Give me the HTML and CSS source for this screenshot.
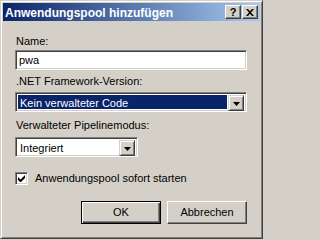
FILE: index.html
```html
<!DOCTYPE html>
<html lang="de">
<head>
<meta charset="utf-8">
<title>Anwendungspool hinzufügen</title>
<link rel="stylesheet" href="styles.css">
</head>
<body>
<div class="window">
  <div class="titlebar">
    <span class="title">Anwendungspool hinzufügen</span>
    <div class="tbtns">
      <span class="tbtn help">?</span>
      <span class="tbtn close"><svg width="8" height="7" viewBox="0 0 8 7"><path d="M0 0h2l2 2.2L6 0h2L5 3.5 8 7H6L4 4.8 2 7H0l3-3.5z" fill="#000"/></svg></span>
    </div>
  </div>
  <div class="content">
    <div class="lbl lbl-name">Name:</div>
    <div class="field text">pwa</div>
    <div class="lbl lbl-net">.NET Framework-Version:</div>
    <div class="field combo wide">
      <span class="value selected">Kein verwalteter Code</span>
      <span class="drop"><svg width="7" height="4" viewBox="0 0 7 4"><path d="M0 0h7L3.5 4z" fill="#000"/></svg></span>
    </div>
    <div class="lbl lbl-pipe">Verwalteter Pipelinemodus:</div>
    <div class="field combo narrow">
      <span class="value">Integriert</span>
      <span class="drop"><svg width="7" height="4" viewBox="0 0 7 4"><path d="M0 0h7L3.5 4z" fill="#000"/></svg></span>
    </div>
    <div class="check-row">
      <span class="checkbox"><svg width="7" height="7" viewBox="0 0 7 7"><path d="M0 2v3l2 2h1l4-4V0L2.5 4.5z" fill="#000"/></svg></span>
      <span class="check-label">Anwendungspool sofort starten</span>
    </div>
    <div class="buttons">
      <span class="btn default">OK</span>
      <span class="btn">Abbrechen</span>
    </div>
  </div>
</div>
</body>
</html>
```

FILE: styles.css
```css
html, body {
  margin: 0;
  padding: 0;
  background: #d4d0c8;
}

body {
  font-family: "Liberation Sans", Arial, sans-serif;
  font-size: 11px;
  line-height: 13px;
  color: #000;
}

.window {
  box-sizing: border-box;
  width: 263px;
  height: 239px;
  background: #d4d0c8;
  border: 1px solid;
  border-color: #d4d0c8 #404040 #404040 #d4d0c8;
  box-shadow: inset 1px 1px #ffffff, inset -1px -1px #808080;
  padding: 2px;
  display: flex;
  flex-direction: column;
}

.titlebar {
  box-sizing: border-box;
  height: 18px;
  background: linear-gradient(to right, #0a246a, #a6caf0);
  display: flex;
  align-items: flex-start;
  justify-content: space-between;
  padding: 0 2px 0 2px;
}

.title {
  color: #fff;
  font-weight: bold;
  font-size: 12px;
  line-height: 14px;
  padding-top: 3px;
}

.tbtns {
  display: flex;
  gap: 1px;
  padding-top: 2px;
}

.tbtn {
  box-sizing: border-box;
  width: 16px;
  height: 14px;
  background: #d4d0c8;
  border: 1px solid;
  border-color: #ffffff #404040 #404040 #ffffff;
  box-shadow: inset -1px -1px #808080;
  display: flex;
  align-items: center;
  justify-content: center;
}

.help {
  font-weight: bold;
  font-size: 11px;
  line-height: 11px;
  padding-top: 1px;
  color: #000;
}

.content {
  flex: 1;
  display: flex;
  flex-direction: column;
  padding: 14px 13px 0 12px;
}

.lbl {
  padding-left: 1px;
}

.lbl-net {
  margin-top: 5px;
}

.lbl-pipe {
  margin-top: 7px;
}

.field {
  box-sizing: border-box;
  height: 20px;
  background: #fff;
  border: 1px solid;
  border-color: #808080 #ffffff #ffffff #808080;
  box-shadow: inset 1px 1px #404040, inset -1px -1px #d4d0c8;
  padding: 2px;
}

.text {
  margin-top: 2px;
  padding-left: 3px;
  line-height: 15px;
}

.combo {
  display: flex;
  align-items: stretch;
}

.wide {
  margin-top: 4px;
}

.narrow {
  margin-top: 5px;
  width: 123px;
}

.value {
  flex: 1;
  line-height: 16px;
  padding-left: 2px;
  margin-right: 1px;
}

.selected {
  background: #0a246a;
  color: #fff;
}

.drop {
  box-sizing: border-box;
  width: 16px;
  height: 16px;
  background: #d4d0c8;
  border: 1px solid;
  border-color: #d4d0c8 #404040 #404040 #d4d0c8;
  box-shadow: inset 1px 1px #ffffff, inset -1px -1px #808080;
  display: flex;
  align-items: center;
  justify-content: center;
  padding-top: 1px;
}

.check-row {
  margin-top: 15px;
  display: flex;
  align-items: center;
  gap: 7px;
  height: 13px;
}

.checkbox {
  box-sizing: border-box;
  width: 13px;
  height: 13px;
  background: #fff;
  border: 1px solid;
  border-color: #808080 #ffffff #ffffff #808080;
  box-shadow: inset 1px 1px #404040, inset -1px -1px #d4d0c8;
  display: flex;
  align-items: center;
  justify-content: center;
}

.check-label {
  line-height: 13px;
}

.buttons {
  margin-top: 16px;
  display: flex;
  justify-content: flex-end;
  gap: 6px;
}

.btn {
  box-sizing: border-box;
  width: 80px;
  height: 23px;
  background: #d4d0c8;
  border: 1px solid;
  border-color: #ffffff #404040 #404040 #ffffff;
  box-shadow: inset -1px -1px #808080, inset 1px 1px #d4d0c8;
  display: flex;
  align-items: center;
  justify-content: center;
}

.btn.default {
  border-color: #000;
  box-shadow: inset 1px 1px #ffffff, inset -1px -1px #404040, inset -2px -2px #808080;
}
```
